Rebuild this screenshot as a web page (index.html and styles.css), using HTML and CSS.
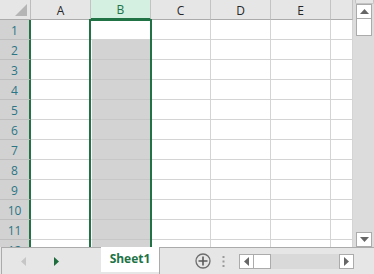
FILE: index.html
```html
<!DOCTYPE html>
<html>
<head>
<meta charset="utf-8">
<link rel="stylesheet" href="styles.css">
</head>
<body>
<div class="app">
  <div class="main">
    <div class="sheet">
      <div class="corner"><span class="tri"></span></div>
      <div class="ch">A</div><div class="ch sel">B</div><div class="ch">C</div><div class="ch">D</div><div class="ch">E</div><div class="ch"></div>

      <div class="rh">1</div><div class="c"></div><div class="c b1"></div><div class="c"></div><div class="c"></div><div class="c"></div><div class="c"></div>
      <div class="rh">2</div><div class="c"></div><div class="c bs"></div><div class="c"></div><div class="c"></div><div class="c"></div><div class="c"></div>
      <div class="rh">3</div><div class="c"></div><div class="c bs"></div><div class="c"></div><div class="c"></div><div class="c"></div><div class="c"></div>
      <div class="rh">4</div><div class="c"></div><div class="c bs"></div><div class="c"></div><div class="c"></div><div class="c"></div><div class="c"></div>
      <div class="rh">5</div><div class="c"></div><div class="c bs"></div><div class="c"></div><div class="c"></div><div class="c"></div><div class="c"></div>
      <div class="rh">6</div><div class="c"></div><div class="c bs"></div><div class="c"></div><div class="c"></div><div class="c"></div><div class="c"></div>
      <div class="rh">7</div><div class="c"></div><div class="c bs"></div><div class="c"></div><div class="c"></div><div class="c"></div><div class="c"></div>
      <div class="rh">8</div><div class="c"></div><div class="c bs"></div><div class="c"></div><div class="c"></div><div class="c"></div><div class="c"></div>
      <div class="rh">9</div><div class="c"></div><div class="c bs"></div><div class="c"></div><div class="c"></div><div class="c"></div><div class="c"></div>
      <div class="rh">10</div><div class="c"></div><div class="c bs"></div><div class="c"></div><div class="c"></div><div class="c"></div><div class="c"></div>
      <div class="rh">11</div><div class="c"></div><div class="c bs"></div><div class="c"></div><div class="c"></div><div class="c"></div><div class="c"></div>
      <div class="rh">12</div><div class="c"></div><div class="c bs"></div><div class="c"></div><div class="c"></div><div class="c"></div><div class="c"></div>

      <div class="selbox"></div>
    </div>
    <div class="vscroll">
      <div class="vcap"></div>
      <div class="sbtn"><svg width="9" height="5" viewBox="0 0 9 5"><polygon points="0,5 9,5 4.5,0" fill="#666"/></svg></div>
      <div class="vthumb"></div>
      <div class="vtrack"></div>
      <div class="sbtn"><svg width="9" height="5" viewBox="0 0 9 5"><polygon points="0,0 9,0 4.5,5" fill="#666"/></svg></div>
    </div>
  </div>
  <div class="tabbar">
    <div class="nav">
      <svg class="nl" width="5" height="9" viewBox="0 0 5 9"><polygon points="5,0 5,9 0,4.5" fill="#c6c6c6"/></svg>
      <svg class="nr" width="5" height="9" viewBox="0 0 5 9"><polygon points="0,0 0,9 5,4.5" fill="#1e6b3c"/></svg>
    </div>
    <div class="tab">Sheet1</div>
    <div class="rest">
      <svg class="plus" width="16" height="16" viewBox="0 0 16 16"><circle cx="8" cy="8" r="7" fill="none" stroke="#6d6d6d" stroke-width="1.3"/><path d="M8 3.5V12.5M3.5 8H12.5" stroke="#5a5a5a" stroke-width="1.6"/></svg>
      <svg class="dots" width="3" height="11" viewBox="0 0 3 11"><rect x="0.5" y="0" width="2" height="2" fill="#9a9a9a"/><rect x="0.5" y="4.5" width="2" height="2" fill="#9a9a9a"/><rect x="0.5" y="9" width="2" height="2" fill="#9a9a9a"/></svg>
      <div class="hscroll">
        <div class="hbtn"><svg width="5" height="9" viewBox="0 0 5 9"><polygon points="5,0 5,9 0,4.5" fill="#666"/></svg></div>
        <div class="hthumb"></div>
        <div class="htrack"></div>
        <div class="hbtn"><svg width="5" height="9" viewBox="0 0 5 9"><polygon points="0,0 0,9 5,4.5" fill="#666"/></svg></div>
      </div>
    </div>
  </div>
</div>
</body>
</html>
```
FILE: styles.css
```css
* { box-sizing: border-box; }
html, body { margin: 0; padding: 0; }
body {
  width: 374px;
  height: 274px;
  overflow: hidden;
  background: #e6e6e6;
  font-family: "Open Sans", "Liberation Sans", sans-serif;
}
.app { width: 374px; height: 274px; display: flex; flex-direction: column; }
.main { display: flex; height: 247px; }
.sheet {
  position: relative;
  width: 353px;
  height: 247px;
  overflow: hidden;
  display: grid;
  grid-template-columns: 31px 60px 60px 60px 60px 60px 22px;
  grid-template-rows: repeat(13, 20px);
  background: #fff;
}
.corner {
  background: #e6e6e6;
  border-right: 1px solid #bdbdbd;
  border-bottom: 1px solid #ababab;
  display: flex;
  justify-content: flex-end;
  align-items: flex-end;
  padding: 0 3px 3px 0;
}
.tri {
  width: 12px;
  height: 12px;
  background: #b5b5b5;
  clip-path: polygon(100% 0, 100% 100%, 0 100%);
}
.ch {
  background: #e6e6e6;
  border-right: 1px solid #c3c3c3;
  border-bottom: 1px solid #ababab;
  display: flex;
  align-items: center;
  justify-content: center;
  font-size: 12px;
  color: #262626;
  padding-top: 1px;
}
.ch.sel {
  background: #d3f0e0;
  color: #217346;
  border-bottom: 2px solid #217346;
}
.rh {
  background: #d2d2d2;
  border-right: 2px solid #217346;
  border-bottom: 1px solid #bfbfbf;
  display: flex;
  align-items: center;
  justify-content: center;
  font-size: 12px;
  color: #2b7585;
  padding-top: 1px;
}
.c {
  border-right: 1px solid #d4d4d4;
  border-bottom: 1px solid #d4d4d4;
  background: #fff;
}
.c.b1 { background: #fff; }
.c.bs { background: #d3d3d3; border-bottom-color: #c7c7c7; border-left: 1px solid #fff; }
.selbox {
  position: absolute;
  left: 89px;
  top: 19px;
  width: 63px;
  height: 230px;
  border: 2px solid #217346;
  border-bottom: none;
  pointer-events: none;
}
.vscroll {
  width: 21px;
  height: 247px;
  background: #dcdcdc;
  display: flex;
  flex-direction: column;
  align-items: center;
  padding-left: 1px;
}
.vcap {
  width: 19px;
  height: 4px;
  background: #e6e6e6;
  border: 1px solid #c3c3c3;
  border-top: none;
  border-radius: 0 0 2px 2px;
}
.sbtn {
  width: 16px;
  height: 15px;
  background: #fff;
  border: 1px solid #ababab;
  display: flex;
  align-items: center;
  justify-content: center;
}
.vthumb {
  width: 16px;
  height: 17px;
  background: #fff;
  border: 1px solid #ababab;
  border-top: none;
}
.vtrack { flex: 1; }
.tabbar {
  height: 27px;
  display: flex;
  background: #e6e6e6;
}
.nav {
  width: 100px;
  height: 27px;
  border-top: 1px solid #ababab;
  border-left: 1px solid #ababab;
  margin-left: 1px;
  display: flex;
  align-items: center;
  padding-left: 19px;
  gap: 28px;
}
.tab {
  width: 58px;
  height: 25px;
  background: #fff;
  color: #217346;
  font-weight: bold;
  font-size: 12px;
  display: flex;
  align-items: center;
  justify-content: center;
  padding-bottom: 2px;
}
.rest {
  flex: 1;
  height: 27px;
  border-top: 1px solid #ababab;
  border-left: 1px solid #ababab;
  display: flex;
  align-items: center;
  padding-left: 35px;
}
.plus { margin-right: 11px; flex: none; }
.dots { margin-right: 14px; flex: none; }
.hscroll {
  display: flex;
  height: 15px;
  width: 115px;
  flex: none;
  background: #d9d9d9;
}
.hbtn {
  width: 15px;
  height: 15px;
  background: #fff;
  border: 1px solid #ababab;
  display: flex;
  align-items: center;
  justify-content: center;
}
.hthumb {
  width: 17px;
  height: 15px;
  background: #fff;
  border: 1px solid #ababab;
  border-left: none;
}
.htrack { flex: 1; }
```
